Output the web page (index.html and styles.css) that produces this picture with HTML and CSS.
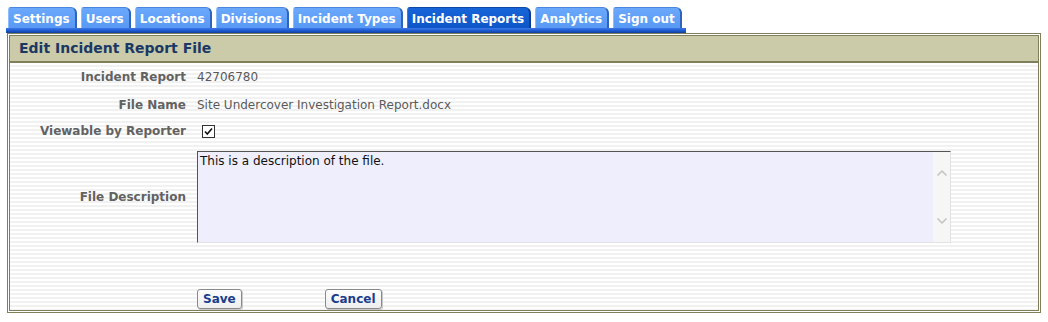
FILE: index.html
```html
<!DOCTYPE html>
<html>
<head>
<meta charset="utf-8">
<link rel="stylesheet" href="styles.css">
</head>
<body>
<div class="page">
  <nav class="tabs">
    <a class="tab">Settings</a>
    <a class="tab">Users</a>
    <a class="tab">Locations</a>
    <a class="tab">Divisions</a>
    <a class="tab">Incident Types</a>
    <a class="tab active">Incident Reports</a>
    <a class="tab">Analytics</a>
    <a class="tab">Sign out</a>
  </nav>
  <div class="tabbar-line"></div>
  <section class="panel">
    <h1 class="panel-head">Edit Incident Report File</h1>
    <div class="panel-body">
      <div class="row row-first">
        <div class="label">Incident Report</div>
        <div class="value">42706780</div>
      </div>
      <div class="row row-second">
        <div class="label">File Name</div>
        <div class="value">Site Undercover Investigation Report.docx</div>
      </div>
      <div class="row">
        <div class="label">Viewable by Reporter</div>
        <div class="value">
          <span class="checkbox"><svg width="11" height="11" viewBox="0 0 11 11"><path d="M2 5.5 L4.3 8 L9 2.5" fill="none" stroke="#111" stroke-width="1.6"/></svg></span>
        </div>
      </div>
      <div class="row row-desc">
        <div class="label">File Description</div>
        <div class="value">
          <div class="textbox">
            <textarea class="ta">This is a description of the file.</textarea>
            <div class="scroll">
              <svg width="12" height="8" viewBox="0 0 12 8"><path d="M1.5 6.5 L6 2 L10.5 6.5" fill="none" stroke="#c2c2c2" stroke-width="1.5"/></svg>
              <svg width="12" height="8" viewBox="0 0 12 8"><path d="M1.5 1.5 L6 6 L10.5 1.5" fill="none" stroke="#c2c2c2" stroke-width="1.5"/></svg>
            </div>
          </div>
        </div>
      </div>
      <div class="row row-buttons">
        <div class="label"></div>
        <div class="value buttons">
          <button class="btn">Save</button>
          <button class="btn btn-cancel">Cancel</button>
        </div>
      </div>
    </div>
  </section>
</div>
</body>
</html>
```

FILE: styles.css
```css
html, body {
  margin: 0;
  padding: 0;
  background: #fff;
}
body {
  font-family: "DejaVu Sans", Verdana, sans-serif;
  font-size: 12px;
}
.page {
  padding: 7px 7px 0 7px;
  width: 1034px;
}
.tabs {
  display: flex;
  gap: 4px;
  padding-left: 1px;
  height: 21px;
}
.tab {
  display: flex;
  align-items: center;
  padding: 1px 5px 0 4px;
  color: #fff;
  font-weight: bold;
  font-size: 12px;
  background: linear-gradient(to bottom, #6aa8fb 0, #5899f5 100%);
  border-top: 1px solid #4a86e0;
  border-left: 1px solid #8cbcfb;
  border-right: 2px solid #2f64b8;
  border-radius: 3px 6px 0 0;
}
.tab.active {
  background: linear-gradient(to bottom, #1764d8 0, #0d56c8 100%);
  border-top-color: #0b48a8;
  border-left-color: #3a7ee0;
  border-right-color: #0a3d90;
}
.tabbar-line {
  width: 680px;
  margin-left: -1px;
  height: 5px;
  background: linear-gradient(to bottom, #3d78e6 0, #1c5bd2 50%, #123f9a 100%);
  position: relative;
  z-index: 1;
}
.panel {
  border: 3px double #7f7f5c;
  background: #fff;
}
.panel-head {
  margin: 0;
  height: 25px;
  line-height: 25px;
  padding-left: 9px;
  background: #cbcbaa;
  border-bottom: 2px solid #7f7f5c;
  font-size: 14px;
  color: #1b3864;
  font-weight: bold;
}
.panel-body {
  background: repeating-linear-gradient(to bottom, #fff 0, #fff 2px, #f1f1f1 2px, #f1f1f1 4px);
  padding: 1px 0 1px 0;
  height: 245px;
  display: flex;
  flex-direction: column;
}
.row {
  display: grid;
  grid-template-columns: 176px 1fr;
  column-gap: 11px;
  align-items: center;
  min-height: 25px;
  margin-top: 1px;
}
.row.row-first {
  margin-top: 0;
}
.row.row-second {
  margin-top: 3px;
}
.label {
  text-align: right;
  font-weight: bold;
  color: #626262;
}
.value {
  color: #5a5a5a;
}
.checkbox {
  display: inline-flex;
  align-items: center;
  justify-content: center;
  width: 11px;
  height: 11px;
  margin-left: 5px;
  margin-top: 3px;
  border: 1px solid #333;
  background: #fff;
}
.row.row-desc {
  margin-top: 8px;
}
.textbox {
  display: flex;
  width: 754px;
  height: 92px;
  box-sizing: border-box;
  border-top: 1px solid #555;
  border-left: 1px solid #555;
  border-right: 1px solid #e2e2e2;
  border-bottom: 1px solid #e2e2e2;
  background: #eeeefd;
}
.ta {
  flex: 1;
  border: 0;
  margin: 0;
  padding: 2px 2px;
  background: transparent;
  resize: none;
  overflow: hidden;
  font-family: "DejaVu Sans", Verdana, sans-serif;
  font-size: 12px;
  color: #111;
  outline: none;
}
.scroll {
  width: 17px;
  background: #f6f6f6;
  display: flex;
  flex-direction: column;
  justify-content: space-between;
  align-items: center;
  padding: 17px 0 17px 0;
}
.row.row-buttons {
  margin-top: auto;
  min-height: 20px;
}
.buttons {
  display: flex;
  align-items: center;
}
.btn {
  height: 20px;
  box-sizing: border-box;
  padding: 0 5px;
  border: 1px solid #8a8a8a;
  border-radius: 3px;
  background: linear-gradient(to bottom, #fdfdfd 0, #eeeeee 100%);
  color: #1a3d8c;
  font-family: "DejaVu Sans", Verdana, sans-serif;
  font-weight: bold;
  font-size: 12px;
  box-shadow: 1px 1px 0 #c8c8c8;
}
.btn-cancel {
  margin-left: 83px;
}
```
